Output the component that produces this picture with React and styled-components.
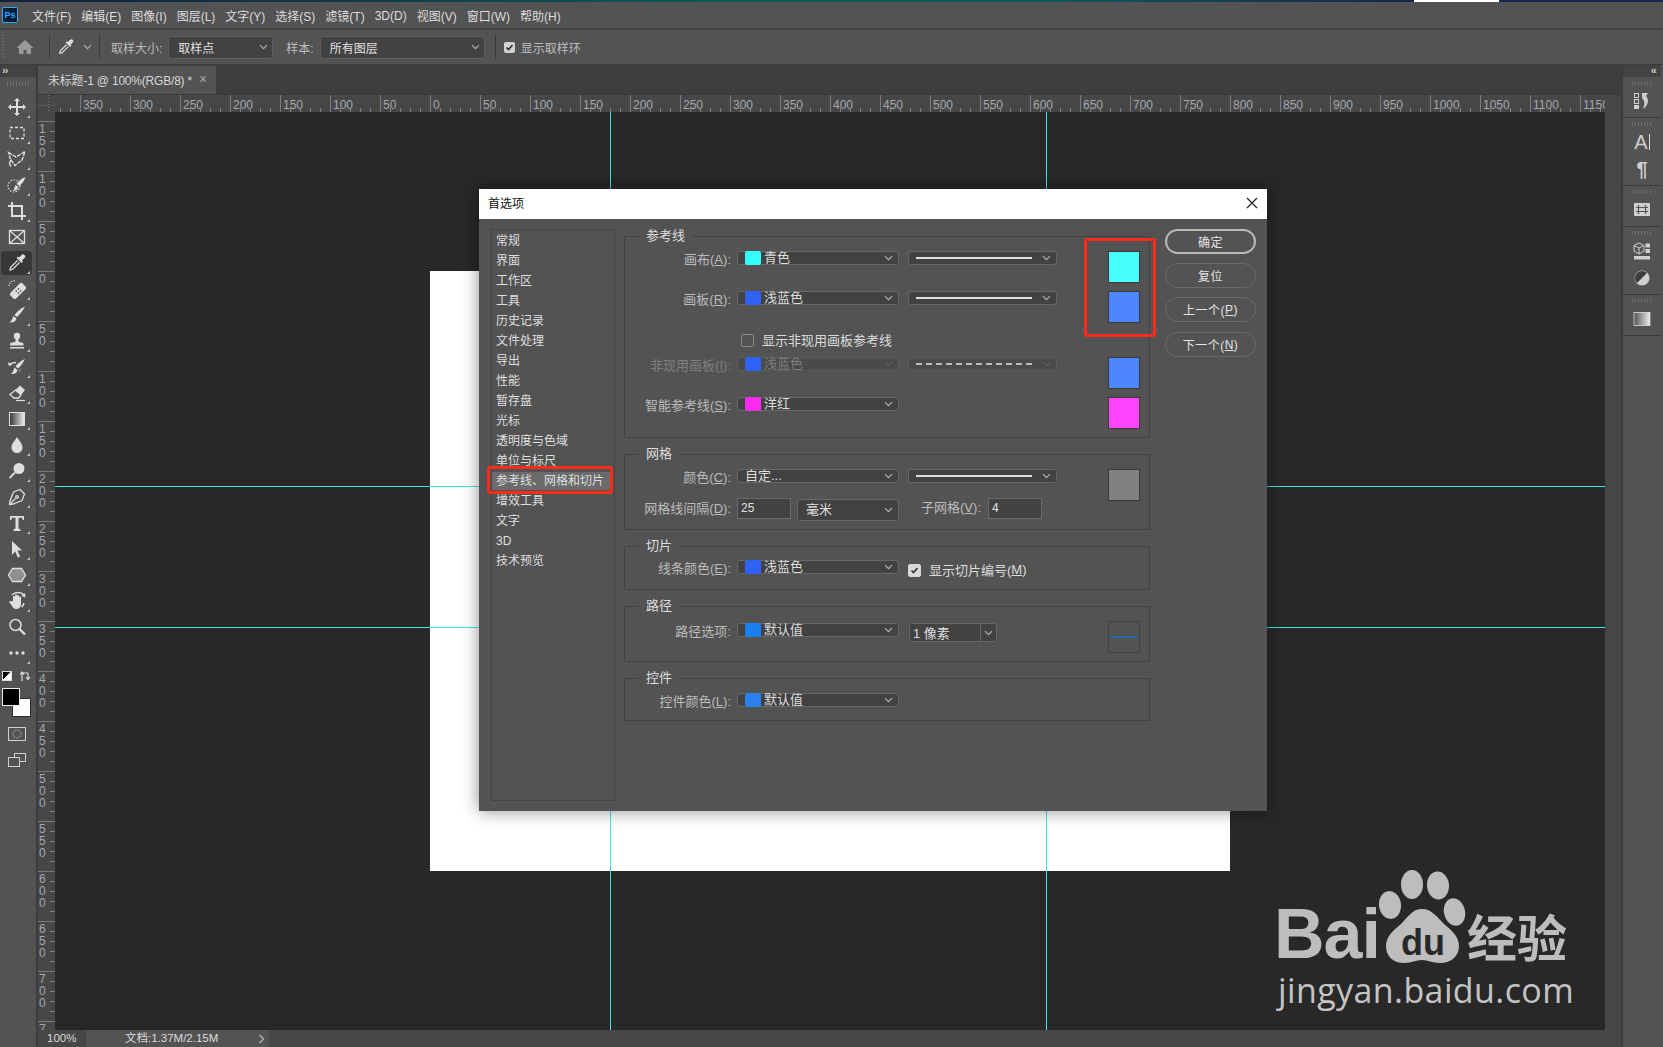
import React from 'react';
import styled, { createGlobalStyle } from 'styled-components';

const Global = createGlobalStyle`
  html, body { margin: 0; padding: 0; background: #535353; }
  * { box-sizing: border-box; }
  body { font-family: "Liberation Sans", "Noto Sans CJK SC", sans-serif; font-size: 12px; }
`;

const Root = styled.div`
  position: relative; width: 1663px; height: 1047px; overflow: hidden;
  display: flex; flex-direction: column; background: #535353; color: #ddd;
`;
const TopStrip = styled.div`
  height: 2px; flex: none; display: flex;
  background: linear-gradient(90deg, #10203a 0, #0d5a58 45%, #0f5a5a 62%, #14264f 85%, #14264f 100%);
`;
const StripGap = styled.div`width: 1414px;`;
const StripWhite = styled.div`width: 85px; background: #fff;`;
const MenuBar = styled.div`
  height: 28px; flex: none; display: flex; align-items: center; padding: 0 0 0 2px;
  background: #535353; border-bottom: 2px solid #404040;
`;
const PsLogo = styled.div`
  width: 16px; height: 16px; border: 1px solid #31a8ff; border-radius: 2px; background: #001e36;
  color: #31a8ff; font: bold 9px/14px "Liberation Sans", sans-serif; text-align: center; margin-right: 14px;
`;
const MenuItems = styled.div`display: flex; gap: 10px; align-items: center; padding-top: 3px;`;
const MenuItem = styled.span`
  font-size: 12px; line-height: 16px; height: 16px; color: #dcdcdc; white-space: nowrap;
  margin-top: ${p => p.$latin ? -1 : 0}px;
`;

const OptionsBar = styled.div`
  height: 35px; flex: none; display: flex; align-items: center; background: #535353;
  border-bottom: 1px solid #3c3c3c; padding-left: 2px;
`;
const Grip = styled.div`width: 2px; height: 24px; background: repeating-linear-gradient(180deg, #6e6e6e 0 1px, transparent 1px 3px); margin-right: 11px;`;
const OptDivider = styled.div`width: 1px; height: 24px; background: #393939; margin: ${p => p.$m || '0 8px'};`;
const OptCaret = styled.span`display: flex; color: #b0b0b0; margin-left: ${p => p.$ml || 0}px;`;
const OptLabel = styled.span`color: #bdbdbd; font-size: 12px; margin-right: ${p => p.$mr || 6}px; white-space: nowrap;`;
const OptSelect = styled.div`
  width: ${p => p.$w}px; height: 23px; margin-right: ${p => p.$mr || 0}px; flex: none;
  display: flex; align-items: center; justify-content: space-between;
  padding: 0 4px 0 9px; background: #424242; border: 1px solid #5f5f5f; border-radius: 3px; color: #e0e0e0; font-size: 12px;
`;
const OptCheck = styled.div`
  width: 11px; height: 11px; background: #d2d2d2; border-radius: 2px; margin-right: 6px; display: flex; align-items: center; justify-content: center;
`;

const Main = styled.div`flex: 1; display: flex; min-height: 0;`;

const Toolbar = styled.div`width: 38px; flex: none; background: #535353; border-right: 2px solid #3c3c3c; display: flex; flex-direction: column;`;
const ToolHeader = styled.div`
  height: 12px; background: #424242; color: #d0d0d0; font: bold 11px/10px "Liberation Sans", sans-serif; padding-left: 2px; letter-spacing: -1px;
`;
const ToolGrip = styled.div`
  height: 5px; margin: 4px 7px 8px 7px; background: repeating-linear-gradient(90deg, #6e6e6e 0 1px, transparent 1px 3px);
`;
const ToolButton = styled.div`
  position: relative; width: 31px; height: 24px; margin: 1px 4px 1px 1px; flex: none;
  display: flex; align-items: center; justify-content: center; border-radius: 3px;
  background: ${p => p.$active ? '#373737' : 'transparent'};
  color: #dedede;
  ${p => p.$corner ? `&::after { content: ''; position: absolute; right: 2px; bottom: 1px; border-left: 3px solid transparent; border-bottom: 3px solid #c4c4c4; }` : ''}
`;
const Swatches = styled.div`position: relative; height: 49px; margin-top: 2px; flex: none;`;
const MiniDefault = styled.div`position: absolute; left: 2px; top: 3px; width: 10px; height: 10px; background: linear-gradient(135deg, #000 0 50%, #fff 50%); border: 1px solid #ddd;`;
const SwapIcon = styled.div`position: absolute; left: 19px; top: 2px;`;
const BgWell = styled.div`position: absolute; left: 12px; top: 30px; width: 19px; height: 19px; background: #fff; border: 1px solid #2e2e2e;`;
const FgWell = styled.div`position: absolute; left: 2px; top: 20px; width: 18px; height: 18px; background: #000; border: 1px solid #eee;`;
const ExtraTool = styled.div`height: 26px; width: 34px; display: flex; align-items: center; justify-content: center; color: #dedede; flex: none; margin-top: ${p => p.$mt || 0}px;`;

const Center = styled.div`flex: 1; min-width: 0; display: flex; flex-direction: column; background: #474747;`;
const TabRow = styled.div`height: 30px; flex: none; background: #3e3e3e; padding-top: 1px; border-bottom: 1px solid #3a3a3a;`;
const Tab = styled.div`
  width: 178px; height: 28px; background: #535353; display: flex; align-items: center; padding: 0 0 2px 10px; color: #d6d6d6; white-space: nowrap; font-size: 12px; letter-spacing: -.2px;
`;
const TabClose = styled.span`margin-left: 7px; color: #a8a8a8; font-size: 14px;`;
const RulerRow = styled.div`height: 17px; flex: none; display: flex;`;
const RulerCorner = styled.div`
  width: 17px; flex: none; background:
    repeating-linear-gradient(90deg, #7a7a7a 0 1px, transparent 1px 3px) 0 10px / 100% 1px no-repeat,
    repeating-linear-gradient(180deg, #7a7a7a 0 1px, transparent 1px 3px) 10px 0 / 1px 100% no-repeat;
`;
const HRuler = styled.div`
  width: 1550px; flex: none; overflow: hidden; display: flex; padding-left: 25px;
  background: repeating-linear-gradient(90deg, #808080 0 1px, transparent 1px 10px) 5px bottom / 100% 4px no-repeat;
`;
const HCell = styled.div`
  width: 50px; flex: none; height: 17px; border-left: 1px solid #7a7a7a; padding-left: 2px;
  color: #a3a8ad; font: 12px/20px "Liberation Sans", sans-serif; overflow: visible;
`;
const Middle = styled.div`flex: 1; display: flex; min-height: 0;`;
const VRuler = styled.div`
  width: 17px; flex: none; overflow: hidden; padding-top: 9px;
  background: repeating-linear-gradient(180deg, #808080 0 1px, transparent 1px 10px) right 9px / 5px 100% no-repeat;
`;
const VCell = styled.div`
  height: 50px; border-top: 1px solid #7a7a7a; padding: 1px 0 0 1px;
  color: #a3a8ad; font: 12px/12px "Liberation Sans", sans-serif; display: flex; flex-direction: column; align-items: flex-start;
`;
const Canvas = styled.div`position: relative; width: 1550px; flex: none; background: #282828; overflow: hidden;`;
const Doc = styled.div`position: absolute; left: 375px; top: 159px; width: 800px; height: 600px; background: #fff;`;
const VGuide = styled.div`position: absolute; top: 0; bottom: 0; left: ${p => p.$x}px; width: 1px; background: #3fe6e6;`;
const HGuide = styled.div`position: absolute; left: 0; right: 0; top: ${p => p.$y}px; height: 1px; background: #3fe6e6;`;
const StatusBar = styled.div`height: 17px; flex: none; display: flex; background: #474747; color: #dcdcdc; font-size: 11.500px; line-height: 17px;`;
const Zoom = styled.div`width: 48px; padding-left: 9px;`;
const DocInfo = styled.div`width: 183px; background: #535353; padding: 0 4px 0 39px; display: flex; justify-content: space-between; align-items: center;`;

const Dock = styled.div`width: 42px; flex: none; background: #535353; border-left: 2px solid #3c3c3c; display: flex; flex-direction: column; padding-right: 2px;`;
const DockHeader = styled.div`height: 12px; background: #424242; color: #d0d0d0; font: bold 11px/10px "Liberation Sans", sans-serif; text-align: right; padding-right: 5px; letter-spacing: -1px;`;
const DockGroup = styled.div`
  flex: none; padding: 10px 0 3px; border-bottom: 1px solid #3a3a3a; display: flex; flex-direction: column; align-items: center;
  background: repeating-linear-gradient(90deg, #6e6e6e 0 1px, transparent 1px 3px) 9px 4px / 19px 4px no-repeat;
  &:last-child { border-bottom: 0; flex: 1; background: none; }
`;
const DockItem = styled.div`height: 27px; width: 100%; display: flex; align-items: center; justify-content: center; color: #cfcfcf;`;
const DockLetter = styled.span`font: ${p => p.$w || 400} ${p => p.$s || 20}px/1 "Liberation Sans", sans-serif;`;
const DockCaret = styled.span`width: 1px; height: 16px; background: #ddd; margin-left: 1px;`;

const Watermark = styled.div`position: absolute; left: 1219px; top: 761px; width: 300px; color: #bdbdbd;`;
const LogoRow = styled.div`display: flex; align-items: flex-end; height: 90px;`;
const LogoBai = styled.span`font: bold 70px/58px "Liberation Sans", sans-serif; letter-spacing: -1px;`;
const LogoPaw = styled.svg`margin-bottom: -3px; margin-left: -2px; flex: none;`;
const LogoJy = styled.span`font: 700 50px/56px "Noto Sans CJK SC", sans-serif; margin-left: 1px;`;
const LogoUrl = styled.div`font: 400 34px/40px "Open Sans", sans-serif; color: #c4c4c4; margin: 7px 0 0 4px; white-space: nowrap; letter-spacing: 0.4px;`;

const Dialog = styled.div`
  position: absolute; left: 479px; top: 189px; width: 788px; height: 622px; background: #535353;
  box-shadow: 0 0 16px rgba(0,0,0,.45); display: flex; flex-direction: column;
`;
const DialogTitle = styled.div`
  height: 30px; flex: none; background: #fff; color: #111; display: flex; align-items: center; justify-content: space-between;
  padding: 0 9px 3px 9px; font-size: 12px;
`;
const DialogBody = styled.div`flex: 1; display: flex; padding: 10px 11px 10px 12px;`;
const CategoryList = styled.div`position: relative; width: 124px; height: 572px; flex: none; border: 1px solid #454545; padding-top: 1px;`;
const Category = styled.div`
  height: 20px; line-height: 20px; padding-left: 4px; font-size: 12px; white-space: nowrap; color: #dfdfdf;
  background: ${p => p.$selected ? 'linear-gradient(180deg, transparent 0 1px, #6b6b6b 1px 19px, transparent 19px)' : 'transparent'};
  width: ${p => p.$selected ? '118px' : 'auto'};
`;
const Content = styled.div`flex: none; width: 526px; margin-left: 9px; display: flex; flex-direction: column; gap: 9px;`;
const Group = styled.fieldset`
  margin: 0; min-width: 0; border: 1px solid #434343; padding: ${p => p.$pad};
  ${p => p.$layout === 'split' ? 'display: flex;' : ''}
`;
const Legend = styled.legend`
  height: 15px; line-height: 13px; margin-left: 14px; padding: 0 7px; font-size: 13px; color: #dedede;
`;
const Row = styled.div`display: flex; align-items: flex-start; height: ${p => p.$h}px; margin-top: ${p => p.$mt || 0}px;`;
const FieldLabel = styled.div`
  width: ${p => p.$w || 106}px; flex: none; text-align: right; line-height: 18px; font-size: 13px; white-space: nowrap; margin-left: ${p => p.$ml || 0}px;
  color: ${p => p.$disabled ? '#7f7f7f' : '#bcbcbc'};
  margin-top: ${p => p.$mt || 0}px;
  direction: rtl;
  u { text-underline-offset: 1px; }
`;
const LabelText = styled.span`direction: ltr; unicode-bidi: isolate;`;
const Select = styled.div`
  position: relative; width: ${p => p.$w || 162}px; height: ${p => p.$h || 14}px; flex: none; margin-left: ${p => p.$ml || 6}px; margin-top: ${p => p.$mt || 0}px;
  background: #424242; border: 1px solid ${p => p.$disabled ? '#5c5c5c' : '#676767'}; border-radius: 3px;
  display: flex; align-items: center; padding-left: ${p => p.$pl || 7}px;
  color: ${p => p.$disabled ? '#7f7f7f' : '#dedede'}; font-size: 13px; line-height: 14px; white-space: nowrap;
  ${p => p.$disabled ? 'background: #4a4a4a;' : ''}
`;
const SelText = styled.span`position: relative; top: ${p => p.$top ?? 0}px;`;
const ColorDot = styled.span`width: 16px; height: 14px; margin: -1px 3px -1px 0; flex: none; border-radius: 2px; background: ${p => p.$c};`;
const Caret = styled.span`position: absolute; right: 5px; top: 50%; margin-top: -4px; height: 8px; display: flex; color: ${p => p.$disabled ? '#626262' : '#b5b5b5'};`;
const LineRule = styled.span`
  width: 116px; height: 0; border-top: 2px ${p => p.$dashed ? 'dashed' : 'solid'} ${p => p.$dashed ? '#bdbdbd' : '#dcdcdc'};
`;
const ColorBox = styled.div`width: 32px; height: 32px; flex: none; margin-left: auto; background: ${p => p.$c}; border: 1px solid #3a3a3a;`;
const CheckRow = styled.div`display: flex; align-items: center; height: 12px; margin-left: 116px; margin-top: 10px; margin-bottom: 12px; font-size: 13px; color: #dcdcdc; white-space: nowrap;`;
const InlineCheck = styled(CheckRow)`margin: 3px 0 0 9px; height: 13px;`;
const CheckBox = styled.span`
  width: 13px; height: 13px; flex: none; border-radius: 2px; margin-right: 8px; display: flex; align-items: center; justify-content: center; position: relative; top: ${p => p.$top || 0}px;
  background: ${p => p.$on ? '#d8d8d8' : 'transparent'}; border: 1px solid ${p => p.$on ? '#d8d8d8' : '#8a8a8a'};
`;
const Input = styled.div`
  width: ${p => p.$w}px; height: 21px; flex: none; background: #424242; border: 1px solid #6a6a6a; margin-left: ${p => p.$ml || 7}px;
  font-size: 12px; line-height: 18px; padding-left: 3px; color: #e0e0e0;
`;
const SplitCaret = styled.span`position: absolute; right: 0; top: 0; bottom: 0; width: 16px; border-left: 1px solid #676767; display: flex; align-items: center; justify-content: center; color: #b5b5b5;`;
const LineBox = styled.div`width: 32px; height: 32px; flex: none; margin-left: auto; border: 1px solid #434343; display: flex; align-items: center; justify-content: center;`;
const LineSample = styled.span`width: 28px; height: 2px; background: #2b69a6;`;
const ColumnFill = styled.div`flex: 1; min-width: 0;`;
const Buttons = styled.div`flex: none; width: 91px; margin-left: 15px; display: flex; flex-direction: column; gap: 9px;`;
const Button = styled.div`
  height: 25px; border-radius: 13px; border: ${p => p.$primary ? '2px solid #b9b9b9' : '1px solid #6b6b6b'};
  display: flex; align-items: center; justify-content: center; color: #e4e4e4; font-size: 12px; letter-spacing: .5px;
  margin-top: ${p => p.$mt || 0}px;
`;
const Highlight = styled.div`position: absolute; border: 3px solid #ff2a1a; border-radius: 3px; left: ${p => p.$l}px; top: ${p => p.$t}px; width: ${p => p.$w}px; height: ${p => p.$h}px; pointer-events: none;`;

const Icon = ({ children, s = 20, vb = 20 }) => (
  <svg width={s} height={s} viewBox={`0 0 ${vb} ${vb}`} fill="currentColor" stroke="none">{children}</svg>
);
const Chevron = () => (
  <svg width="9" height="8" viewBox="0 0 9 8" fill="none" stroke="currentColor" strokeWidth="1.2"><path d="M1 2.2l3.5 3.5L8 2.2" /></svg>
);
const Sel = ({ c, children, disabled, ...r }) => (
  <Select $disabled={disabled} {...r}>
    {c && <ColorDot $c={c} />}<SelText>{children}</SelText>
    <Caret $disabled={disabled}><Chevron /></Caret>
  </Select>
);
const LineSel = ({ dashed, disabled }) => (
  <Select $w={149} $ml={9} $disabled={disabled}><LineRule $dashed={dashed} /><Caret $disabled={disabled}><Chevron /></Caret></Select>
);
const Lbl = ({ text, k, disabled, ...r }) => (
  <FieldLabel $disabled={disabled} {...r}><LabelText>{text}{k && <>(<u>{k}</u>)</>}:</LabelText></FieldLabel>
);

const S = { fill: 'none', stroke: 'currentColor' };
const tools = [
  { i: <path d="M10 1l3 3h-2v5h5V7l3 3-3 3v-2h-5v5h2l-3 3-3-3h2v-5H4v2l-3-3 3-3v2h5V4H7z" />, c: 1 },
  { i: <rect x="3" y="4.5" width="14" height="11" {...S} strokeWidth="1.3" strokeDasharray="3 2" />, c: 1 },
  { i: <g {...S} strokeWidth="1.4"><path d="M1.5 3.5L9 8l9-5.500L15 11l-7 5.500-4.500-6z" strokeDasharray="4 1" /><path d="M5 11c-2.500 1-3.500 4-1 6.500" /></g>, c: 1 },
  { i: <g><circle cx="7" cy="11" r="6" {...S} strokeWidth="1.2" strokeDasharray="1.5 1.5" /><path d="M18.5 2c-1 3.500-3 6-6 9l-3-2c2-3 5-5.500 9-7z" /><path d="M8.500 10l3 2c-1 3-3 4-5.500 4 1-1 1.500-4 2.500-6z" /></g>, c: 1 },
  { i: <path d="M5 1v14h14M1 5h14v14" {...S} strokeWidth="2" />, c: 1 },
  { i: <g {...S} strokeWidth="1.3"><rect x="2.500" y="3.500" width="15" height="13" /><path d="M2.500 3.500l15 13M17.500 3.500l-15 13" /></g>, c: 0 },
  { i: <g><path d="M12 4.500l2.500-2.500a2.100 2.100 0 0 1 3 3L15 7.500l1 1L14.500 10l-5-5L11 3.500z" /><path d="M10.500 7.500L3.500 14.500 3 17l2.500-.5 7-7" {...S} strokeWidth="1.3" /></g>, c: 1, active: 1 },
  { i: <g><g transform="rotate(-45 11 12)"><rect x="2.500" y="8" width="17" height="8" rx="2" /><rect x="9" y="10" width="1.500" height="1.500" fill="#535353" /><rect x="12" y="10" width="1.500" height="1.500" fill="#535353" /><rect x="9" y="13" width="1.500" height="1.500" fill="#535353" /><rect x="12" y="13" width="1.500" height="1.500" fill="#535353" /></g><path d="M2 7a5 5 0 0 1 6-5" {...S} strokeWidth="1.200" strokeDasharray="1.200 1.200" /></g>, c: 1 },
  { i: <g><path d="M18 1.500c-2 4-5 8-8 10.500l-2.500-2c2-3 6-6.500 10.500-8.500z" /><path d="M6.500 11l3 2.500c-.5 3-3.500 4.500-7 4 1.500-1 2.500-3 4-6.500z" /></g>, c: 1 },
  { i: <g><circle cx="10" cy="5" r="3.200" /><path d="M8.500 7.500h3v3c0 1 3.500.5 5 2V14.500H3V12.500c1.500-1.500 5.500-1 5.500-2z" /><rect x="3" y="16" width="14" height="1.500" /></g>, c: 1 },
  { i: <g><path d="M18 2c-2 4-4 7-7 9.500l-2.500-2c2-3 5-5.500 9.500-7.500z" /><path d="M7.500 10.500l3 2.500c-.5 3-3 4.500-6.500 4 1.500-1 2.500-3 3.500-6.500z" /><path d="M2 8c2-2 4-2.500 7-2.500" {...S} strokeWidth="1.300" /><path d="M1 5l1 4 3.500-1.500z" /><path d="M13 12a6 6 0 0 1-1 4" {...S} strokeWidth="1" strokeDasharray="1 1" /></g>, c: 1 },
  { i: <g><path d="M13 2.500l5 4.500-4 5-5.500-5z" /><path d="M8.500 7l5.500 5-2.500 3H7l-4-3.500z" {...S} strokeWidth="1.300" /><path d="M9 17.500h9" {...S} strokeWidth="1.300" /></g>, c: 1 },
  { i: <g><defs><linearGradient id="tg"><stop offset="0" stopColor="#333" /><stop offset="1" stopColor="#eee" /></linearGradient></defs><rect x="2.500" y="3.500" width="15" height="13" fill="url(#tg)" stroke="#e0e0e0" /></g>, c: 1 },
  { i: <path d="M10 2c3 5 5.500 7 5.500 10.500a5.500 5.500 0 0 1-11 0C4.500 9 7 7 10 2z" />, c: 1 },
  { i: <g><circle cx="12" cy="7.500" r="5.500" /><path d="M8 11.500L2.500 17" {...S} strokeWidth="1.800" /></g>, c: 1 },
  { i: <g {...S} strokeWidth="1.300"><path d="M13 2.500L17.500 7l-2.500 6.500L6 17l-3.500.5.500-3.500 3.500-9z" /><path d="M3 17l5.500-5.500" /><circle cx="10" cy="10" r="1.300" /></g>, c: 1 },
  { i: <path d="M3 3h14v4h-1.200l-.8-2.200h-3.500v10.700l2 1V18H6.500v-1.500l2-1V4.800H5L4.200 7H3z" />, c: 1 },
  { i: <path d="M5 2l10 9.500h-4.500l2.500 6-2.200 1-2.500-6L5 16z" />, c: 1 },
  { i: <path d="M5.500 3.500h9l4 6.500-4 6.500h-9L1.500 10z" fill="#8f8f8f" stroke="#dcdcdc" strokeWidth="1.300" />, c: 1 },
  { i: <g><path d="M6 10V6a1 1 0 0 1 2 0V4.500a1 1 0 0 1 2 0V5a1 1 0 0 1 2 0v1.500a1 1 0 0 1 2 0V13c0 3-2 5-5 5-2 0-3-1-4-3l-2.500-3.500c-.7-1 .5-2 1.500-1.200z" /><path d="M5 4c3-3.500 9-3.500 12 0M17 12c-.5 2-1.200 3-2.500 4" {...S} strokeWidth="1.500" /><path d="M18.500 6.500L18 2l-3.500 3z" /></g>, c: 1 },
  { i: <g {...S}><circle cx="8.500" cy="8" r="5.500" strokeWidth="1.500" /><path d="M12.500 12l5.500 5.500" strokeWidth="2.300" /></g>, c: 0 },
  { i: <g><circle cx="4" cy="10" r="1.700" /><circle cx="10" cy="10" r="1.700" /><circle cx="16" cy="10" r="1.700" /></g>, c: 1 },
];

const cats = ['常规', '界面', '工作区', '工具', '历史记录', '文件处理', '导出', '性能', '暂存盘', '光标', '透明度与色域', '单位与标尺', '参考线、网格和切片', '增效工具', '文字', '3D', '技术预览'];
const menus = ['文件(F)', '编辑(E)', '图像(I)', '图层(L)', '文字(Y)', '选择(S)', '滤镜(T)', '3D(D)', '视图(V)', '窗口(W)', '帮助(H)'];
const hLabels = [350, 300, 250, 200, 150, 100, 50, 0, 50, 100, 150, 200, 250, 300, 350, 400, 450, 500, 550, 600, 650, 700, 750, 800, 850, 900, 950, 1000, 1050, 1100, 1150];
const vLabels = [150, 100, 50, 0, 50, 100, 150, 200, 250, 300, 350, 400, 450, 500, 550, 600, 650, 700, 750];
const check = <svg width="9" height="9" viewBox="0 0 9 9" fill="none" stroke="#333" strokeWidth="1.700"><path d="M1.500 4.500l2 2L7.500 2" /></svg>;

export default function App() {
  return (
    <Root>
      <Global />
      <TopStrip><StripGap /><StripWhite /></TopStrip>
      <MenuBar>
        <PsLogo>Ps</PsLogo>
        <MenuItems>{menus.map(m => <MenuItem key={m} $latin={m === '3D(D)'}>{m}</MenuItem>)}</MenuItems>
      </MenuBar>
      <OptionsBar>
        <Grip />
        <Icon s={20}><path d="M10 3L1.500 11H4v6h4.500v-4h3v4H16v-6h2.500z" fill="#9a9a9a" /></Icon>
        <OptDivider $m="0 7px 0 14px" />
        <Icon s={18}><path d="M12 4.500l2.500-2.500a2.100 2.100 0 0 1 3 3L15 7.500l1 1L14.500 10l-5-5L11 3.500z" fill="#dcdcdc" /><path d="M10.500 7.500L3.500 14.500 3 17l2.500-.5 7-7" fill="none" stroke="#dcdcdc" strokeWidth="1.300" /></Icon>
        <OptCaret $ml={8}><Chevron /></OptCaret>
        <OptDivider $m="0 11px 0 7px" />
        <OptLabel>取样大小:</OptLabel>
        <OptSelect $w={105} $mr={13}><span>取样点</span><OptCaret><Chevron /></OptCaret></OptSelect>
        <OptLabel>样本:</OptLabel>
        <OptSelect $w={165}><span>所有图层</span><OptCaret><Chevron /></OptCaret></OptSelect>
        <OptDivider $m="0 8px 0 10px" />
        <OptCheck>{check}</OptCheck>
        <OptLabel>显示取样环</OptLabel>
      </OptionsBar>
      <Main>
        <Toolbar>
          <ToolHeader>››</ToolHeader>
          <ToolGrip />
          {tools.map((t, k) => (
            <ToolButton key={k} $active={t.active} $corner={t.c}><Icon>{t.i}</Icon></ToolButton>
          ))}
          <Swatches>
            <MiniDefault />
            <SwapIcon><svg width="12" height="12" viewBox="0 0 12 12" fill="none" stroke="#dcdcdc" strokeWidth="1.200"><path d="M3 11V3h6M1 4.500L3 2l2 2.500M9 3v6M7 7l2 2.500L11 7" /></svg></SwapIcon>
            <BgWell />
            <FgWell />
          </Swatches>
          <ExtraTool $mt={4}>
            <svg width="18" height="14" viewBox="0 0 18 14" fill="none" stroke="#cfcfcf"><rect x=".5" y=".5" width="17" height="13" /><circle cx="9" cy="7" r="4" strokeDasharray="1 1" /></svg>
          </ExtraTool>
          <ExtraTool>
            <svg width="18" height="14" viewBox="0 0 18 14" fill="none" stroke="#cfcfcf"><rect x="6.500" y=".5" width="11" height="8" fill="#535353" /><rect x=".5" y="4.500" width="11" height="9" fill="#535353" /></svg>
          </ExtraTool>
        </Toolbar>
        <Center>
          <TabRow>
            <Tab>未标题-1 @ 100%(RGB/8) *<TabClose>×</TabClose></Tab>
          </TabRow>
          <RulerRow>
            <RulerCorner />
            <HRuler>{hLabels.map((v, k) => <HCell key={k}>{v}</HCell>)}</HRuler>
          </RulerRow>
          <Middle>
            <VRuler>
              {vLabels.map((v, k) => (
                <VCell key={k}>{String(v).split('').map((d, n) => <span key={n}>{d}</span>)}</VCell>
              ))}
              <VCell><span>7</span></VCell>
            </VRuler>
            <Canvas>
              <Doc />
              <VGuide $x={555} />
              <VGuide $x={991} />
              <HGuide $y={374} />
              <HGuide $y={515} />
              <Watermark>
                <LogoRow>
                  <LogoBai>Bai</LogoBai>
                  <LogoPaw width="88" height="96" viewBox="0 0 88 96">
                    <g fill="#bdbdbd">
                      <ellipse cx="12" cy="35" rx="11" ry="14" transform="rotate(-8 12 35)" />
                      <ellipse cx="34" cy="14.500" rx="11" ry="14.500" />
                      <ellipse cx="60" cy="15.500" rx="11" ry="14" transform="rotate(-5 60 15.500)" />
                      <ellipse cx="76.500" cy="42" rx="10.500" ry="14" transform="rotate(-14 76.500 42)" />
                      <path d="M44 39c10 0 15 8 22 15 7 6 15 12 15 22 0 11-9 17-19 17-8 0-12-3-18-3s-10 3-18 3C16 93 8 87 8 76c0-10 8-16 15-22 7-7 11-15 21-15z" />
                    </g>
                    <text x="45" y="85" textAnchor="middle" fill="#282828" fontFamily="Liberation Sans, sans-serif" fontSize="36" fontWeight="700">du</text>
                  </LogoPaw>
                  <LogoJy>经验</LogoJy>
                </LogoRow>
                <LogoUrl>jingyan.baidu.com</LogoUrl>
              </Watermark>
            </Canvas>
          </Middle>
          <StatusBar>
            <Zoom>100%</Zoom>
            <DocInfo>
              <span>文档:1.37M/2.15M</span>
              <svg width="7" height="10" viewBox="0 0 7 10" fill="none" stroke="#bdbdbd" strokeWidth="1.100"><path d="M1.500 1l4 4-4 4" /></svg>
            </DocInfo>
          </StatusBar>
        </Center>
        <Dock>
          <DockHeader>‹‹</DockHeader>
          <DockGroup>
            <DockItem>
              <Icon s={18} vb={18}><path fillRule="evenodd" d="M1 1h5v5H1zM2 2v3h3V2zM1 7h5v5H1zM2 8v3h3V8zM1 13h5v4H1z" /><path d="M9 1h6l-2 3c3 3 3 9-3 13 2-5 2-8-1-11z" /></Icon>
            </DockItem>
          </DockGroup>
          <DockGroup>
            <DockItem><DockLetter>A</DockLetter><DockCaret /></DockItem>
            <DockItem><DockLetter $w={700}>¶</DockLetter></DockItem>
          </DockGroup>
          <DockGroup>
            <DockItem>
              <Icon s={18} vb={18}><rect x="1" y="2" width="16" height="13" /><path d="M5.500 4v9M12.500 4v9M3 6.500h12M3 10.500h12" stroke="#535353" fill="none" strokeWidth="1.200" /></Icon>
            </DockItem>
          </DockGroup>
          <DockGroup>
            <DockItem>
              <Icon s={18} vb={18}><path d="M6 1l5 2.500v5.500L6 12 1 9V3.500z" fill="none" stroke="currentColor" /><path d="M1 3.500L6 6l5-2.500M6 6v6" fill="none" stroke="currentColor" /><path d="M12.500 1.500H17v4h-4.500zM12.500 7H17v4h-4.500zM1 14h16v3.500H1z" /></Icon>
            </DockItem>
            <DockItem>
              <Icon s={18} vb={18}><circle cx="9" cy="9" r="7.500" /><path d="M14 4A7 7 0 0 0 4 14z" fill="#3d3d3d" /></Icon>
            </DockItem>
          </DockGroup>
          <DockGroup>
            <DockItem>
              <Icon s={18} vb={18}><defs><linearGradient id="dg"><stop offset="0" stopColor="#555" /><stop offset="1" stopColor="#eee" /></linearGradient></defs><rect x="1" y="2.500" width="16" height="13" fill="url(#dg)" stroke="#ddd" strokeWidth=".8" /></Icon>
            </DockItem>
          </DockGroup>
          <DockGroup />
        </Dock>
      </Main>

      <Dialog>
        <DialogTitle>
          <span>首选项</span>
          <svg width="12" height="12" viewBox="0 0 12 12" stroke="#222" strokeWidth="1.200"><path d="M1 1l10 10M11 1L1 11" /></svg>
        </DialogTitle>
        <DialogBody>
          <CategoryList>
            {cats.map(c => <Category key={c} $selected={c.startsWith('参考线')}>{c}</Category>)}
            <Highlight $l={-5} $t={236} $w={126} $h={28} />
          </CategoryList>
          <Content>
            <Group $pad="7px 9px 8px 0">
              <Legend>参考线</Legend>
              <Row $h={32}>
                <Lbl text="画布" k="A" /><Sel c="#3ff">青色</Sel><LineSel /><ColorBox $c="#48ffff" />
              </Row>
              <Row $h={32} $mt={8}>
                <Lbl text="画板" k="R" /><Sel c="#2e63f5">浅蓝色</Sel><LineSel /><ColorBox $c="#4c85ff" />
              </Row>
              <CheckRow><CheckBox $top={1} />显示非现用画板参考线</CheckRow>
              <Row $h={32}>
                <Lbl text="非现用画板" k="I" disabled /><Sel c="#2e63f5" disabled>浅蓝色</Sel><LineSel dashed disabled /><ColorBox $c="#4c85ff" />
              </Row>
              <Row $h={32} $mt={8}>
                <Lbl text="智能参考线" k="S" /><Sel c="#ff2cf0">洋红</Sel><ColorBox $c="#ff44ff" />
              </Row>
            </Group>
            <Group $pad="7px 9px 8px 0" $layout="split">
              <Legend>网格</Legend>
              <ColumnFill>
                <Row $h={14}>
                  <Lbl text="颜色" k="C" /><Sel>自定...</Sel><LineSel />
                </Row>
                <Row $h={23} $mt={15}>
                  <Lbl text="网格线间隔" k="D" $mt={2} />
                  <Input $w={54} $ml={6}>25</Input>
                  <Sel $w={102} $h={22} $ml={6} $mt={1} $pl={8}>毫米</Sel>
                  <Lbl text="子网格" k="V" $w={59} $ml={23} $mt={1} />
                  <Input $w={54}>4</Input>
                </Row>
              </ColumnFill>
              <ColorBox $c="#808080" />
            </Group>
            <Group $pad="6px 9px 12px 0">
              <Legend>切片</Legend>
              <Row $h={17}>
                <Lbl text="线条颜色" k="E" /><Sel c="#2e63f5">浅蓝色</Sel>
                <InlineCheck><CheckBox $on $top={1}>{check}</CheckBox>显示切片编号(<u>M</u>)</InlineCheck>
              </Row>
            </Group>
            <Group $pad="7px 9px 8px 0">
              <Legend>路径</Legend>
              <Row $h={32}>
                <Lbl text="路径选项" $mt={2} /><Sel c="#1a80f0" $mt={2}>默认值</Sel>
                <Select $w={88} $h={19} $ml={10} $mt={2} $pl={3}><SelText $top={1}>1 像素</SelText><SplitCaret><Chevron /></SplitCaret></Select>
                <LineBox><LineSample /></LineBox>
              </Row>
            </Group>
            <Group $pad="7px 9px 13px 0">
              <Legend>控件</Legend>
              <Row $h={14}>
                <Lbl text="控件颜色" k="L" /><Sel c="#2a80ee">默认值</Sel>
              </Row>
            </Group>
          </Content>
          <Buttons>
            <Button $primary>确定</Button>
            <Button>复位</Button>
            <Button>上一个(<u>P</u>)</Button>
            <Button $mt={1}>下一个(<u>N</u>)</Button>
          </Buttons>
        </DialogBody>
        <Highlight $l={605} $t={49} $w={72} $h={99} />
      </Dialog>
    </Root>
  );
}
